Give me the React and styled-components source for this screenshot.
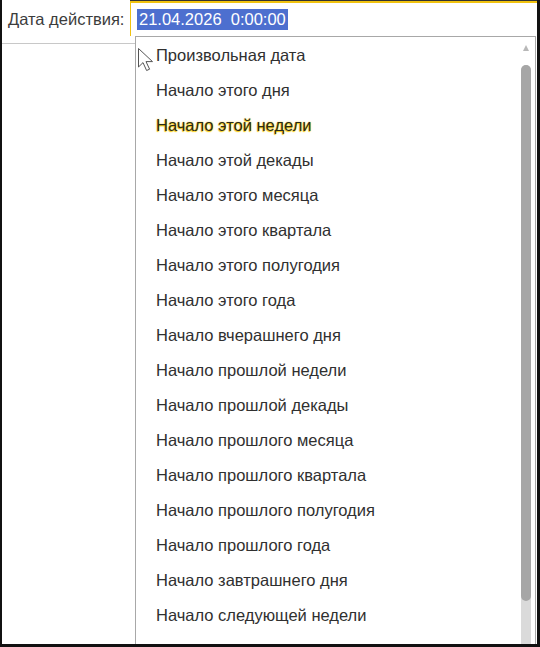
import React from "react";
import styled, { createGlobalStyle } from "styled-components";

const Global = createGlobalStyle`
  html, body { margin: 0; padding: 0; background: #fff; }
  body { font-family: "Liberation Sans", Arial, sans-serif; }
`;

const Frame = styled.div`
  width: 540px;
  height: 647px;
  box-sizing: border-box;
  border-left: 2px solid #111;
  border-right: 3px solid #111;
  border-bottom: 3px solid #111;
  background: #fff;
  display: flex;
  flex-direction: column;
  overflow: hidden;
  position: relative;
`;

const Header = styled.div`
  height: 36px;
  display: flex;
  flex: none;
`;

const Label = styled.div`
  width: 128px;
  box-sizing: border-box;
  padding: 10px 0 0 6px;
  font-size: 16.5px;
  color: #3c3c3c;
  white-space: nowrap;
`;

const InputOuter = styled.div`
  flex: 1;
  border-top: 1px solid #333;
  display: flex;
`;

const Input = styled.div`
  flex: 1;
  border-top: 2px solid #f0c20f;
  border-left: 1px solid #f0c20f;
  padding: 6px 0 0 6px;
`;

const Selected = styled.span`
  display: inline-block;
  background: #4d6fcf;
  color: #fff;
  font-size: 16.5px;
  line-height: 21px;
  padding: 0 2px 0 2px;
  white-space: pre;
`;

const Body = styled.div`
  flex: 1;
  display: flex;
  min-height: 0;
`;

const LeftPane = styled.div`
  width: 133px;
  margin-top: 7px;
  border-top: 1px solid #c8c8c8;
`;

const Dropdown = styled.div`
  flex: 1;
  margin-right: 1px;
  border: 1px solid #a8a8a8;
  border-bottom: none;
  display: flex;
  position: relative;
  min-height: 0;
`;

const List = styled.div`
  flex: 1;
  padding-top: 1px;
`;

const Item = styled.div`
  height: 35px;
  line-height: 35px;
  padding-left: 20px;
  font-size: 16.5px;
  color: ${(p) => (p.$hover ? "#2a2a1a" : "#303030")};
  white-space: nowrap;
  text-shadow: ${(p) => (p.$hover ? "0 0 1.5px #f5c800, -0.5px 0.5px 1px #f5c800" : "none")};
`;

const ScrollCol = styled.div`
  width: 10px;
  margin-right: 4px;
  display: flex;
  flex-direction: column;
  align-items: center;
`;

const Arrow = styled.div`
  margin-top: 8px;
  width: 0;
  height: 0;
  border-left: 3.5px solid transparent;
  border-right: 3.5px solid transparent;
  border-bottom: 6px solid #b8b8b8;
`;

const Track = styled.div`
  margin-top: 14px;
  width: 10px;
  flex: 1;
  background: #dadada;
  border-radius: 5px 5px 0 0;
  display: flex;
  flex-direction: column;
`;

const Thumb = styled.div`
  height: 536px;
  background: #a6a6a6;
  border-radius: 5px;
`;

const Cursor = styled.svg`
  position: absolute;
  left: 1px;
  top: 10px;
  pointer-events: none;
`;

const items = [
  "Произвольная дата",
  "Начало этого дня",
  "Начало этой недели",
  "Начало этой декады",
  "Начало этого месяца",
  "Начало этого квартала",
  "Начало этого полугодия",
  "Начало этого года",
  "Начало вчерашнего дня",
  "Начало прошлой недели",
  "Начало прошлой декады",
  "Начало прошлого месяца",
  "Начало прошлого квартала",
  "Начало прошлого полугодия",
  "Начало прошлого года",
  "Начало завтрашнего дня",
  "Начало следующей недели",
];

export default function App() {
  return (
    <>
      <Global />
      <Frame>
        <Header>
          <Label>Дата действия:</Label>
          <InputOuter>
            <Input>
              <Selected>{"21.04.2026  0:00:00"}</Selected>
            </Input>
          </InputOuter>
        </Header>
        <Body>
          <LeftPane />
          <Dropdown>
            <List>
              {items.map((t, i) => (
                <Item key={t} $hover={i === 2}>
                  {t}
                </Item>
              ))}
            </List>
            <ScrollCol>
              <Arrow />
              <Track>
                <Thumb />
              </Track>
            </ScrollCol>
            <Cursor width="20" height="26" viewBox="0 0 20 26">
              <path
                d="M1.5 1.5 L1.5 20 L6 15.6 L9.6 23.5 L12.6 22.2 L9 14.6 L15.5 14.6 Z"
                fill="#fff"
                stroke="#555"
                strokeWidth="1"
                strokeLinejoin="miter"
              />
            </Cursor>
          </Dropdown>
        </Body>
      </Frame>
    </>
  );
}
